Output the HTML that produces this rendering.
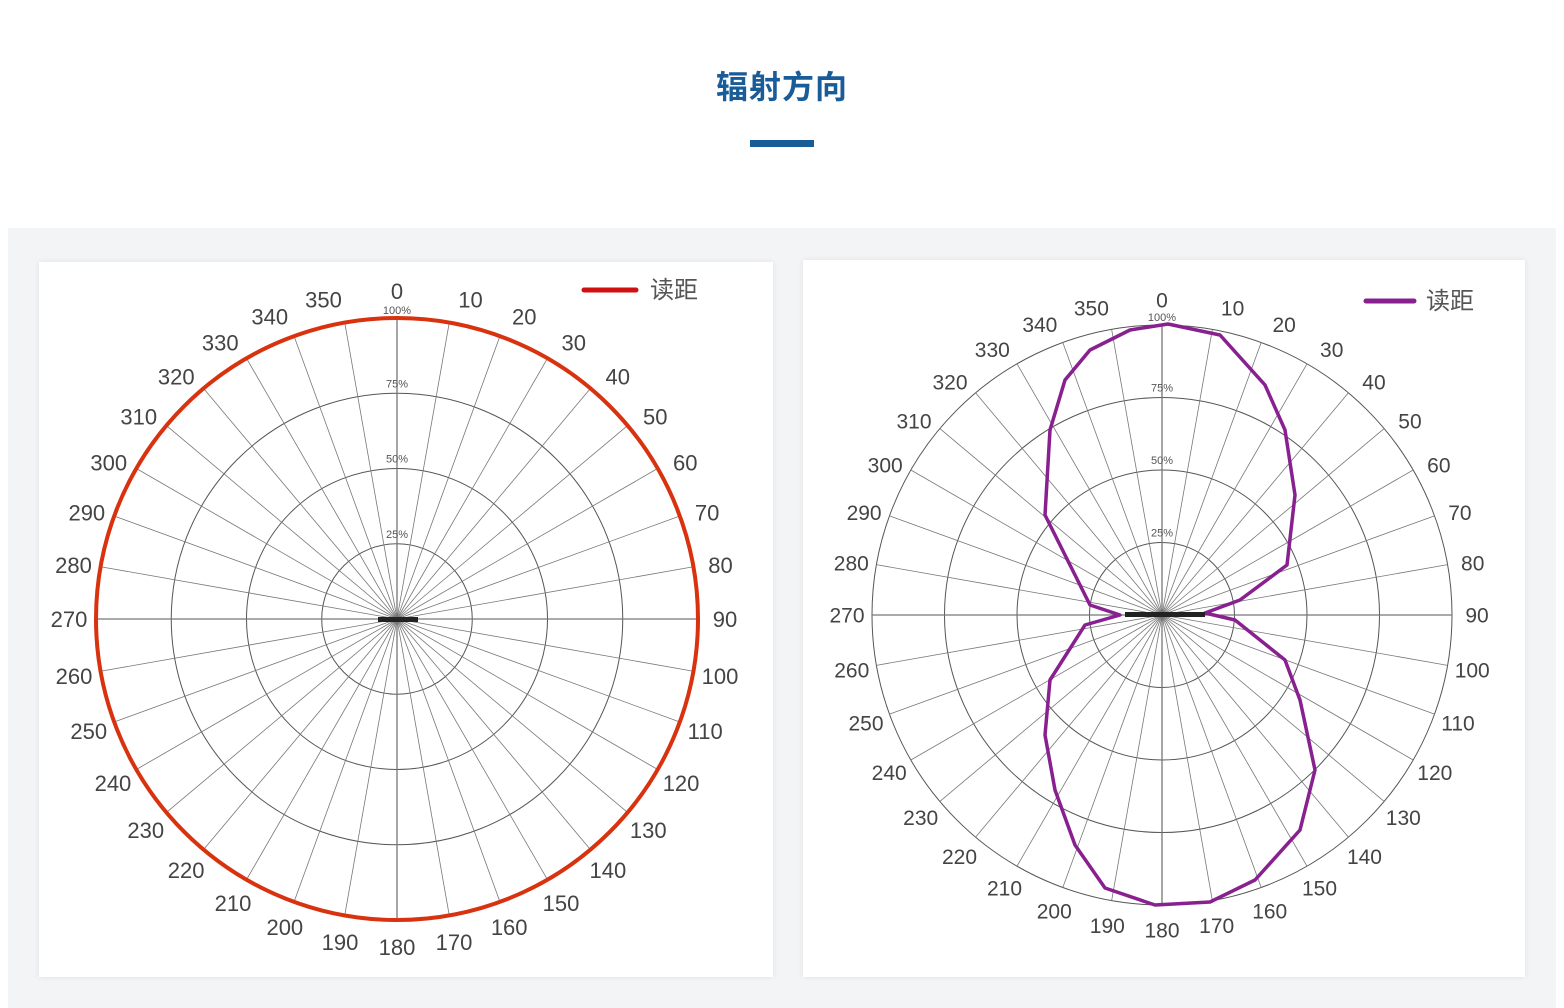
<!DOCTYPE html>
<html><head><meta charset="utf-8"><style>
html,body{margin:0;padding:0;background:#fff;width:1564px;height:1008px;overflow:hidden;font-family:"Liberation Sans","Noto Sans CJK SC",sans-serif}
.title{position:absolute;top:62px;left:0;width:1564px;text-align:center;font-size:32px;font-weight:bold;color:#1a5c98;letter-spacing:1px}
.bar{position:absolute;left:750px;top:140px;width:64px;height:7px;background:#1a5c98}
.bg{position:absolute;left:8px;top:228px;width:1548px;height:780px;background:#f3f4f6}
.card{position:absolute;background:#fff;box-shadow:0 0 6px rgba(0,0,0,0.08)}
svg{position:absolute;left:0;top:0}
</style></head><body>
<div class="title">辐射方向</div>
<div class="bar"></div>
<div class="bg"></div>
<div class="card" style="left:39px;top:262px;width:734px;height:715px"></div>
<div class="card" style="left:803px;top:260px;width:722px;height:717px"></div>
<svg id="s" width="1564" height="1008" xmlns="http://www.w3.org/2000/svg">
<g id="g1"></g><g id="g2"></g>
<circle cx="397" cy="619" r="301" fill="none" stroke="#d8320f" stroke-width="4"/>
<polygon fill="none" stroke="#882090" stroke-width="3.5" stroke-linejoin="round" points="1168,324 1220,335 1265,385 1285,430 1295,495 1287,565 1240,600 1205,613 1235,620 1285,660 1300,700 1315,770 1300,830 1255,880 1210,902 1155,905 1105,888 1075,845 1055,790 1045,735 1050,680 1085,625 1120,615 1090,605 1045,515 1050,430 1065,380 1090,350 1130,330"/>
<line x1="584" y1="290" x2="636" y2="290" stroke="#d01010" stroke-width="5" stroke-linecap="round"/>
<text x="650" y="298" font-size="24" fill="#555" font-family="Liberation Sans,Noto Sans CJK SC,sans-serif">读距</text>
<line x1="1366" y1="301" x2="1414" y2="301" stroke="#882090" stroke-width="5" stroke-linecap="round"/>
<text x="1426" y="309" font-size="24" fill="#555" font-family="Liberation Sans,Noto Sans CJK SC,sans-serif">读距</text>
<rect x="378" y="617" width="40" height="5" fill="#222"/>
<rect x="1125" y="612" width="80" height="5" fill="#222"/>
</svg>
<script>
function chart(id,cx,cy,R,lr,fs){
 var g=document.getElementById(id),h='';
 [1,0.75,0.5,0.25].forEach(function(f){h+='<circle cx="'+cx+'" cy="'+cy+'" r="'+(R*f)+'" fill="none" stroke="#555" stroke-width="1"/>';});
 for(var a=0;a<360;a+=10){var t=a*Math.PI/180,x=cx+R*Math.sin(t),y=cy-R*Math.cos(t);
  h+='<line x1="'+cx+'" y1="'+cy+'" x2="'+x+'" y2="'+y+'" stroke="#777" stroke-width="'+(a%90?0.8:1.3)+'"/>';
  var sh=0;if(Math.cos(t)>0&&a%180){sh=3*Math.cos(t)*(a<180?1:-1);}
  var t2=(a+sh)*Math.PI/180;
  var lx=cx+lr*Math.sin(t2),ly=cy-lr*Math.cos(t2);
  h+='<text x="'+lx+'" y="'+(ly+fs*0.36)+'" text-anchor="middle" font-size="'+fs+'" fill="#444" font-family="Liberation Sans,sans-serif">'+a+'</text>';}
 ['100%','75%','50%','25%'].forEach(function(s,i){var f=1-i*0.25;h+='<text x="'+cx+'" y="'+(cy-R*f+(i?-6:-4))+'" text-anchor="middle" font-size="11" fill="#555" font-family="Liberation Sans,sans-serif">'+s+'</text>';});
 g.innerHTML=h;}
chart('g1',397,619,301,328,22);
chart('g2',1162,615,290,315,21);
</script>
</body></html>
